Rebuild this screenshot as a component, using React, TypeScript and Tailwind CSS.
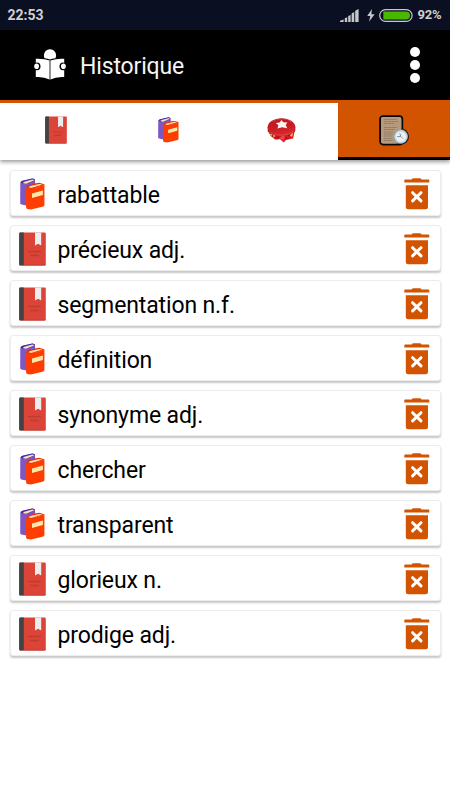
import * as React from "react";

type EntryKind = "dictionary" | "synonyms";

interface HistoryEntry {
  label: string;
  kind: EntryKind;
}

const entries: HistoryEntry[] = [
  { label: "rabattable", kind: "synonyms" },
  { label: "précieux adj.", kind: "dictionary" },
  { label: "segmentation n.f.", kind: "dictionary" },
  { label: "définition", kind: "synonyms" },
  { label: "synonyme adj.", kind: "dictionary" },
  { label: "chercher", kind: "synonyms" },
  { label: "transparent", kind: "synonyms" },
  { label: "glorieux n.", kind: "dictionary" },
  { label: "prodige adj.", kind: "dictionary" },
];

function RedBook({ className }: { className?: string }) {
  return (
    <svg className={className} viewBox="0 0 27 34" preserveAspectRatio="none">
      <rect x="0.2" y="0.5" width="26.6" height="33" rx="1.2" fill="#db4437" />
      <path d="M1.4 0.5H4.8V33.5H1.4A1.2 1.2 0 0 1 0.2 32.3V1.7A1.2 1.2 0 0 1 1.4 0.5Z" fill="#434343" />
      <path d="M4.8 32.8H26.8V32.3A1.2 1.2 0 0 1 25.6 33.5H4.8Z" fill="#b8372c" />
      <path d="M16 0.5H22.2V13.6L19.1 11.8L16 13.6Z" fill="#ededed" />
      <path d="M9 19.5H22M11.2 23.5H20" stroke="#bf3c31" strokeWidth="1.3" />
    </svg>
  );
}

function TwoBooks({ className }: { className?: string }) {
  return (
    <svg className={className} viewBox="0 0 26 32" preserveAspectRatio="none">
      <path d="M0.3 5.2L6.5 6.5L16 4.5V24L6.5 27.6L1.4 26.6Q0.2 26.2 0.2 24.8Z" fill="#7e57c2" />
      <path d="M0.3 5.2Q0.5 3.6 2 3L13 0.5L15.6 1.2V5L6.5 7L0.3 5.6Z" fill="#7650bd" />
      <path d="M0.6 4.6Q1.2 3.2 2.6 2.8L12.8 0.4L15.4 1.2L14.4 1.8L12.9 1.4L4.2 3.5Q2.9 3.9 2.6 5.4Z" fill="#4527a0" />
      <path d="M3.2 5Q3.5 4 4.8 3.7L12.9 1.6L14.7 2.2L6.2 5.8Z" fill="#ffe0b2" />
      <path d="M6.3 10.2L11.2 10.8L25.4 7V26.8Q25.4 28 24.3 28.4L11.4 31.5L7.5 30.9Q6.3 30.4 6.3 29Z" fill="#ff3d00" />
      <path d="M6.3 10.4Q6.5 8.2 8.4 7.4L19.9 4.8L25.3 6.2L25.4 7.3L11.2 11Z" fill="#f33a00" />
      <path d="M7.8 8.9Q8.3 7.7 9.7 7.2L19.9 4.9L22 5.5L10.4 8.1L8.8 9.6Z" fill="#dd2c00" />
      <path d="M9 9.2Q9.6 8.4 10.8 8.1L20.1 5.9L23.3 6.6L11.6 9.9Z" fill="#ffe0b2" />
      <path d="M12.5 15.6L23.8 12.6V17L12.5 20Z" fill="#ffe9a8" />
    </svg>
  );
}

function GameIcon({ className }: { className?: string }) {
  return (
    <svg className={className} viewBox="0 0 29 27">
      <defs>
        <linearGradient id="game-top" x1="0" y1="0" x2="0.3" y2="1">
          <stop offset="0" stopColor="#b9181c" />
          <stop offset="0.55" stopColor="#c61c22" />
          <stop offset="1" stopColor="#dc2730" />
        </linearGradient>
      </defs>
      <path d="M1 12L3.2 18.5L8 22.5L13 22.3L16.8 25.6L19 22.9L26.2 21.4L28 12Z" fill="#d91f29" />
      <path d="M0.7 9.5V14.2Q3.5 19.8 14.5 19.6Q26 19.6 28.3 13.8V9.5Z" fill="#c0151f" />
      <ellipse cx="14.5" cy="10.2" rx="13.8" ry="9" fill="url(#game-top)" />
      <path d="M2.2 14.8Q6.3 18.2 14.5 18.2Q22.5 18 27 14.3" fill="none" stroke="#dc5a60" strokeWidth="0.6" />
      <path d="M4.5 4.8Q8.5 1.9 15 1.7Q21 1.8 24.8 5" fill="none" stroke="#cc5457" strokeWidth="0.7" />
      <path d="M14.4 2.9L16.4 5.3L20.4 5.4L18.8 7.9L20.2 11.2L15.1 10.3L10.5 11.5L11.3 8.1L8.7 5.9L12.7 5.4Z" fill="#fff4f0" />
      <path d="M2.6 16.8L5.4 17.6L4.5 19.3ZM5.8 18L8.2 18.6L6.7 20.6ZM22.8 18.5L26.2 15.6L25 19.8Z" fill="#f4d441" />
      <path d="M4.4 18.3L6.4 18.7L5.3 20ZM21 18.2L22.9 18L22.1 20Z" fill="#54251a" />
      <path d="M7.8 21L11.1 18.6L12.6 20.5L10.4 22.4ZM18.6 19L22.2 21.6L18 22.6Z" fill="#bd111a" />
      <path d="M12.3 21.4L15.5 18.8L17.8 19.6L16.5 22.9Z" fill="#ee4650" />
    </svg>
  );
}

function HistoryIcon({ className }: { className?: string }) {
  return (
    <svg className={className} viewBox="0 0 30 31">
      <rect x="1.1" y="1.1" width="22.2" height="28.4" rx="3" fill="#b69a78" stroke="#080808" strokeWidth="1.8" />
      <circle cx="21.8" cy="21.6" r="8.1" fill="#090909" />
      <rect x="2" y="2" width="20.2" height="26.5" rx="2" fill="#b69a7c" />
      <path
        d="M4.8 4.5H18M4.8 6.5H19M4.8 8.5H15M4.8 12.5H18M4.8 14.5H15.5M4.8 17H14M4.8 19H13.5M4.8 21H13M4.8 23.5H13M4.8 25.5H13.5"
        stroke="#937e68"
        strokeWidth="1.2"
        strokeDasharray="3.5 0.3"
      />
      <circle cx="21.8" cy="21.6" r="7.3" fill="#7d9bb6" />
      <circle cx="21.8" cy="21.6" r="6.5" fill="#c0d5e6" />
      <circle cx="21.8" cy="21.6" r="5.2" fill="#edf1f4" />
      <path d="M21.8 21.6L20.8 18.3M21.8 21.6H18" stroke="#6d7882" strokeWidth="0.8" />
      <path d="M21.8 21.6L24.6 23.8" stroke="#d98080" strokeWidth="0.7" />
    </svg>
  );
}

function ReaderIcon({ className }: { className?: string }) {
  return (
    <svg className={className} viewBox="0 0 32 32">
      <path d="M10.6 9.2A6.1 6.1 0 1 1 21.4 9.2Q18 9.7 16 10.6Q14 9.7 10.6 9.2Z" fill="white" />
      <path d="M1.8 9.7Q9.8 9.3 15.6 11.4V30.4Q9.5 27.4 1.8 28Z" fill="white" />
      <path d="M30.2 9.7Q22.2 9.3 16.4 11.4V30.4Q22.5 27.4 30.2 28Z" fill="white" />
      <path d="M15.6 11V30.5H16.4V11Z" fill="#8a8a8a" />
      <ellipse cx="3" cy="17.3" rx="3.5" ry="3.9" fill="black" />
      <ellipse cx="29" cy="17.3" rx="3.5" ry="3.9" fill="black" />
      <ellipse cx="2.6" cy="17.3" rx="2.4" ry="2.8" fill="white" />
      <ellipse cx="29.4" cy="17.3" rx="2.4" ry="2.8" fill="white" />
    </svg>
  );
}

function TrashIcon({ className }: { className?: string }) {
  return (
    <svg className={className} viewBox="0 0 26 32">
      <path d="M1.2 1.5H7.7Q8.2 0.2 9.5 0.2H15.7Q17 0.2 17.5 1.5H24.4Q25.3 1.5 25.3 2.4V4.5H0.3V2.4Q0.3 1.5 1.2 1.5Z" fill="#d35400" />
      <path d="M1.8 7.2H24V28.8Q24 31.3 21.5 31.3H4.3Q1.8 31.3 1.8 28.8Z" fill="#d35400" />
      <path d="M8.6 14.7L17 22.9M17 14.7L8.6 22.9" stroke="white" strokeWidth="3" strokeLinecap="round" />
    </svg>
  );
}

function StatusBar() {
  return (
    <div className="flex h-[30px] items-center bg-[#0b0f22] pr-[7px] pl-[7.5px] text-[#cfcfd3]">
      <span className="pt-px text-[14px] leading-[29px] font-bold">22:53</span>
      <svg className="ml-auto h-[13px] w-[20px]" viewBox="0 0 20 13">
        <path d="M0 13V11.7L3.6 10.4V13ZM4.8 13V9.3L7.2 8.3V13ZM8.2 13V7L10.6 6V13ZM11.6 13V4.5L14.2 3V13ZM15.2 13V1.8L18.6 0V13Z" fill="#c8c8cb" />
      </svg>
      <svg className="ml-[7px] h-[13px] w-2" viewBox="0 0 8 13">
        <path d="M4.9 0L0.2 7.1H3.3L2 12.8L7.6 5.2H4.4Z" fill="#c8c8cb" />
      </svg>
      <svg className="ml-[4px] h-[13px] w-[34px]" viewBox="0 0 34 13">
        <rect x="0.7" y="0.7" width="32.4" height="11.6" rx="5.8" fill="none" stroke="#c8c8cb" strokeWidth="1.2" />
        <path d="M4.3 2.5H27A4 4 0 0 1 27 10.5H4.3Z" fill="#48b800" />
      </svg>
      <span className="ml-[4.5px] w-[25.5px] text-[13px] font-bold tracking-[-0.2px]">92%</span>
    </div>
  );
}

function Tab({ active, children }: { active?: boolean; children: React.ReactNode }) {
  return (
    <button
      className={
        active
          ? "flex h-[60px] w-[112px] items-center justify-center border-b-[3px] border-black bg-[#d35400] pt-[3px]"
          : "flex h-[60px] flex-1 items-center justify-center border-t-[3px] border-[#d35400] bg-white pb-[3px]"
      }
    >
      {children}
    </button>
  );
}

function HistoryRow({ label, kind }: HistoryEntry) {
  return (
    <li className="flex h-[46px] items-center rounded-[3px] border border-[#ececec] bg-white pr-[10px] pl-[8px] shadow-[0_2px_2px_rgba(0,0,0,0.22)]">
      {kind === "dictionary" ? (
        <RedBook className="mt-[2px] h-[34px] w-[27px]" />
      ) : (
        <TwoBooks className="mt-[2px] mr-px ml-px h-[32px] w-[25px]" />
      )}
      <span className="ml-[12px] flex-1 pt-[5px] text-[23px] leading-none tracking-[-0.13px] whitespace-nowrap text-black">
        {label}
      </span>
      <button className="mt-px" aria-label="Supprimer">
        <TrashIcon className="block h-[32px] w-[26px]" />
      </button>
    </li>
  );
}

export default function App() {
  return (
    <div className="min-h-[800px] w-[450px] bg-white font-[Roboto,sans-serif]">
      <StatusBar />
      <header className="flex h-[70px] items-center bg-black pr-[30px] pl-[34px]">
        <ReaderIcon className="h-8 w-8" />
        <h1 className="ml-[14px] pt-[3px] text-[23px] leading-none tracking-[-0.15px] text-[#f4f4f4]">Historique</h1>
        <button className="ml-auto flex flex-col gap-[3px]" aria-label="Menu">
          <span className="size-[10px] rounded-full bg-white" />
          <span className="size-[10px] rounded-full bg-white" />
          <span className="size-[10px] rounded-full bg-white" />
        </button>
      </header>
      <nav className="flex h-[60px] shadow-[0_2px_4px_rgba(0,0,0,0.4)]">
        <Tab>
          <RedBook className="h-[28px] w-[22px]" />
        </Tab>
        <Tab>
          <TwoBooks className="mr-px h-[26px] w-[21px]" />
        </Tab>
        <Tab>
          <GameIcon className="h-[27px] w-[29px]" />
        </Tab>
        <Tab active>
          <HistoryIcon className="h-[31px] w-[30px]" />
        </Tab>
      </nav>
      <ul className="flex flex-col gap-[9px] px-[9.5px] pt-[10px]">
        {entries.map((entry) => (
          <HistoryRow key={entry.label} {...entry} />
        ))}
      </ul>
    </div>
  );
}
